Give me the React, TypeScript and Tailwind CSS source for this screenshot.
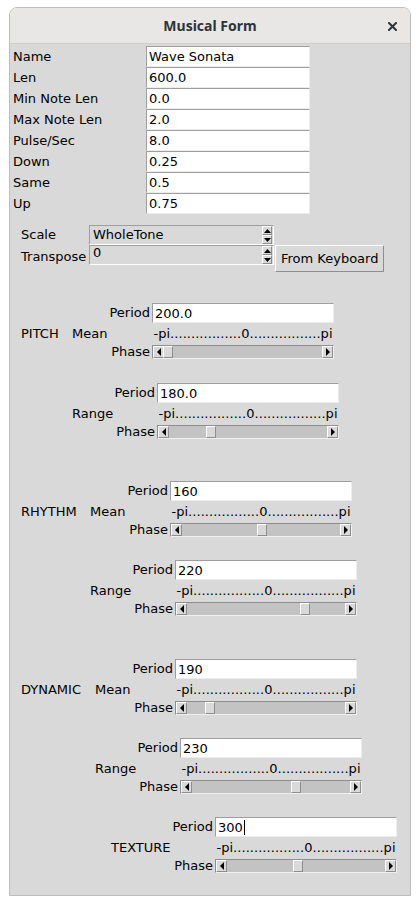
import React from 'react'

const fields: [string, string][] = [
  ['Name', 'Wave Sonata'],
  ['Len', '600.0'],
  ['Min Note Len', '0.0'],
  ['Max Note Len', '2.0'],
  ['Pulse/Sec', '8.0'],
  ['Down', '0.25'],
  ['Same', '0.5'],
  ['Up', '0.75'],
]

const SCALE_TEXT = '-pi.................0.................pi'

function Entry({ value, className, cursor }: { value: string; className: string; cursor?: boolean }) {
  return (
    <div
      className={`${className} flex items-center bg-white border-t border-l border-[#9e9e9e] border-b border-r border-b-[#ececec] border-r-[#ececec] pl-[2px] leading-none`}
    >
      <span>{value}</span>
      {cursor && <span className="ml-[1px] w-[1px] h-[15px] bg-black" />}
    </div>
  )
}

function Tri({ dir }: { dir: 'left' | 'right' | 'up' | 'down' }) {
  const pts = {
    left: '5,0 5,8 1,4',
    right: '1,0 1,8 5,4',
    up: '0,4 7,4 3.5,0',
    down: '0,0 7,0 3.5,4',
  }[dir]
  const vertical = dir === 'up' || dir === 'down'
  return (
    <svg width={vertical ? 7 : 6} height={vertical ? 4 : 8} viewBox={vertical ? '0 0 7 4' : '0 0 6 8'}>
      <polygon points={pts} fill="#000" />
    </svg>
  )
}

function Scrollbar({ thumb }: { thumb: number }) {
  return (
    <div className="relative w-[182px] h-[14px] flex bg-[#c3c3c3] border-t border-l border-[#8e8e8e] border-b border-r border-b-[#f0f0f0] border-r-[#f0f0f0]">
      <div className="w-[11px] h-full flex items-center justify-center bg-[#d9d9d9] border-t border-l border-white border-b border-r border-b-[#8e8e8e] border-r-[#8e8e8e]">
        <Tri dir="left" />
      </div>
      <div className="flex-1" />
      <div className="w-[11px] h-full flex items-center justify-center bg-[#d9d9d9] border-t border-l border-white border-b border-r border-b-[#8e8e8e] border-r-[#8e8e8e]">
        <Tri dir="right" />
      </div>
      <div
        className="absolute top-0 h-full w-[10px] bg-[#d9d9d9] border-t border-l border-white border-b border-r border-b-[#8e8e8e] border-r-[#8e8e8e]"
        style={{ left: thumb }}
      />
    </div>
  )
}

function Spinbox({ value, top }: { value: string; top?: boolean }) {
  return (
    <div className="w-[185px] h-[20px] flex bg-[#d9d9d9] border-t border-l border-[#9e9e9e] border-b border-r border-b-white border-r-white">
      <span className={`flex-1 pl-[3px] ${top ? 'leading-[14px]' : 'leading-[18px]'}`}>{value}</span>
      <div className="w-[10px] flex flex-col mr-[1px]">
        <div className="flex-1 flex items-center justify-center border-t border-l border-white border-b border-r border-b-[#8e8e8e] border-r-[#8e8e8e]">
          <Tri dir="up" />
        </div>
        <div className="flex-1 flex items-center justify-center border-t border-l border-white border-b border-r border-b-[#8e8e8e] border-r-[#8e8e8e]">
          <Tri dir="down" />
        </div>
      </div>
    </div>
  )
}

type BlockProps = {
  lead: string
  groupW: string
  subW: string
  group?: string
  sub?: string
  value: string
  thumb: number
  cursor?: boolean
  className?: string
}

function Block({ lead, groupW, subW, group, sub, value, thumb, cursor, className }: BlockProps) {
  return (
    <div className={className}>
      <div className="flex h-[20px]">
        <span className={`${lead} text-right pr-[2px] leading-[20px]`}>Period</span>
        <Entry value={value} className="w-[182px] h-[20px]" cursor={cursor} />
      </div>
      <div className="flex h-[22px] items-center">
        <span className={`${groupW} whitespace-nowrap`}>{group}</span>
        <span className={subW}>{sub}</span>
        <span className="w-[182px] text-center whitespace-nowrap tracking-[0.05px]">{SCALE_TEXT}</span>
      </div>
      <div className="flex h-[14px]">
        <span className={`${lead} text-right pr-[2px] leading-[14px]`}>Phase</span>
        <Scrollbar thumb={thumb} />
      </div>
    </div>
  )
}

export default function App() {
  return (
    <div className="min-h-[905px] bg-white pt-[7px] pl-[9px] font-['DejaVu_Sans',sans-serif] text-[13px] text-black">
      <div className="w-[402px] border border-[#bdbdbd] rounded-t-[8px] overflow-hidden">
        {/* title bar */}
        <div className="relative h-[36px] bg-[#e8e7e6] border-b border-[#cfcdca] flex items-center justify-center">
          <span className="font-['Noto_Sans',sans-serif] font-bold text-[14px] text-[#2e3436]">Musical Form</span>
          <svg className="absolute right-[13px] top-[14px]" width="9" height="9" viewBox="0 0 9 9">
            <path d="M1 1 L8 8 M8 1 L1 8" stroke="#2e3436" strokeWidth="2" strokeLinecap="square" />
          </svg>
        </div>

        {/* body */}
        <div className="bg-[#d9d9d9] pt-[2px] pb-[22px]">
          {fields.map(([label, value]) => (
            <div key={label} className="flex h-[21px]">
              <span className="w-[136px] pl-[3px] leading-[21px]">{label}</span>
              <Entry value={value} className="w-[164px] h-[21px]" />
            </div>
          ))}

          <div className="mt-[11px] flex h-[20px]">
            <span className="w-[79px] pl-[11px] leading-[20px]">Scale</span>
            <Spinbox value="WholeTone" />
          </div>
          <div className="flex items-start">
            <span className="w-[79px] pl-[11px] leading-[22px] mt-[1px]">Transpose</span>
            <Spinbox value="0" top />
            <button className="ml-[1px] h-[27px] px-[5px] bg-[#d9d9d9] border-t border-l border-white border-b border-r border-b-[#8e8e8e] border-r-[#8e8e8e] leading-none">
              From Keyboard
            </button>
          </div>

          <Block className="mt-[31px]" lead="w-[142px]" groupW="w-[62px] pl-[11px]" subW="w-[80px]" group="PITCH" sub="Mean" value="200.0" thumb={10} />
          <Block className="mt-[24px]" lead="w-[147px]" groupW="w-[62px] pl-[11px]" subW="w-[85px]" sub="Range" value="180.0" thumb={48} />

          <Block className="mt-[42px]" lead="w-[160px]" groupW="w-[80px] pl-[11px]" subW="w-[80px]" group="RHYTHM" sub="Mean" value="160" thumb={86} />
          <Block className="mt-[23px]" lead="w-[165px]" groupW="w-[80px] pl-[11px]" subW="w-[85px]" sub="Range" value="220" thumb={124} />

          <Block className="mt-[43px]" lead="w-[165px]" groupW="w-[85px] pl-[11px]" subW="w-[80px]" group="DYNAMIC" sub="Mean" value="190" thumb={29} />
          <Block className="mt-[23px]" lead="w-[170px]" groupW="w-[85px] pl-[11px]" subW="w-[85px]" sub="Range" value="230" thumb={110} />

          <Block className="mt-[23px]" lead="w-[205px]" groupW="w-[205px] pl-[101px]" subW="w-0" group="TEXTURE" value="300" thumb={77} cursor />
        </div>
      </div>
    </div>
  )
}
